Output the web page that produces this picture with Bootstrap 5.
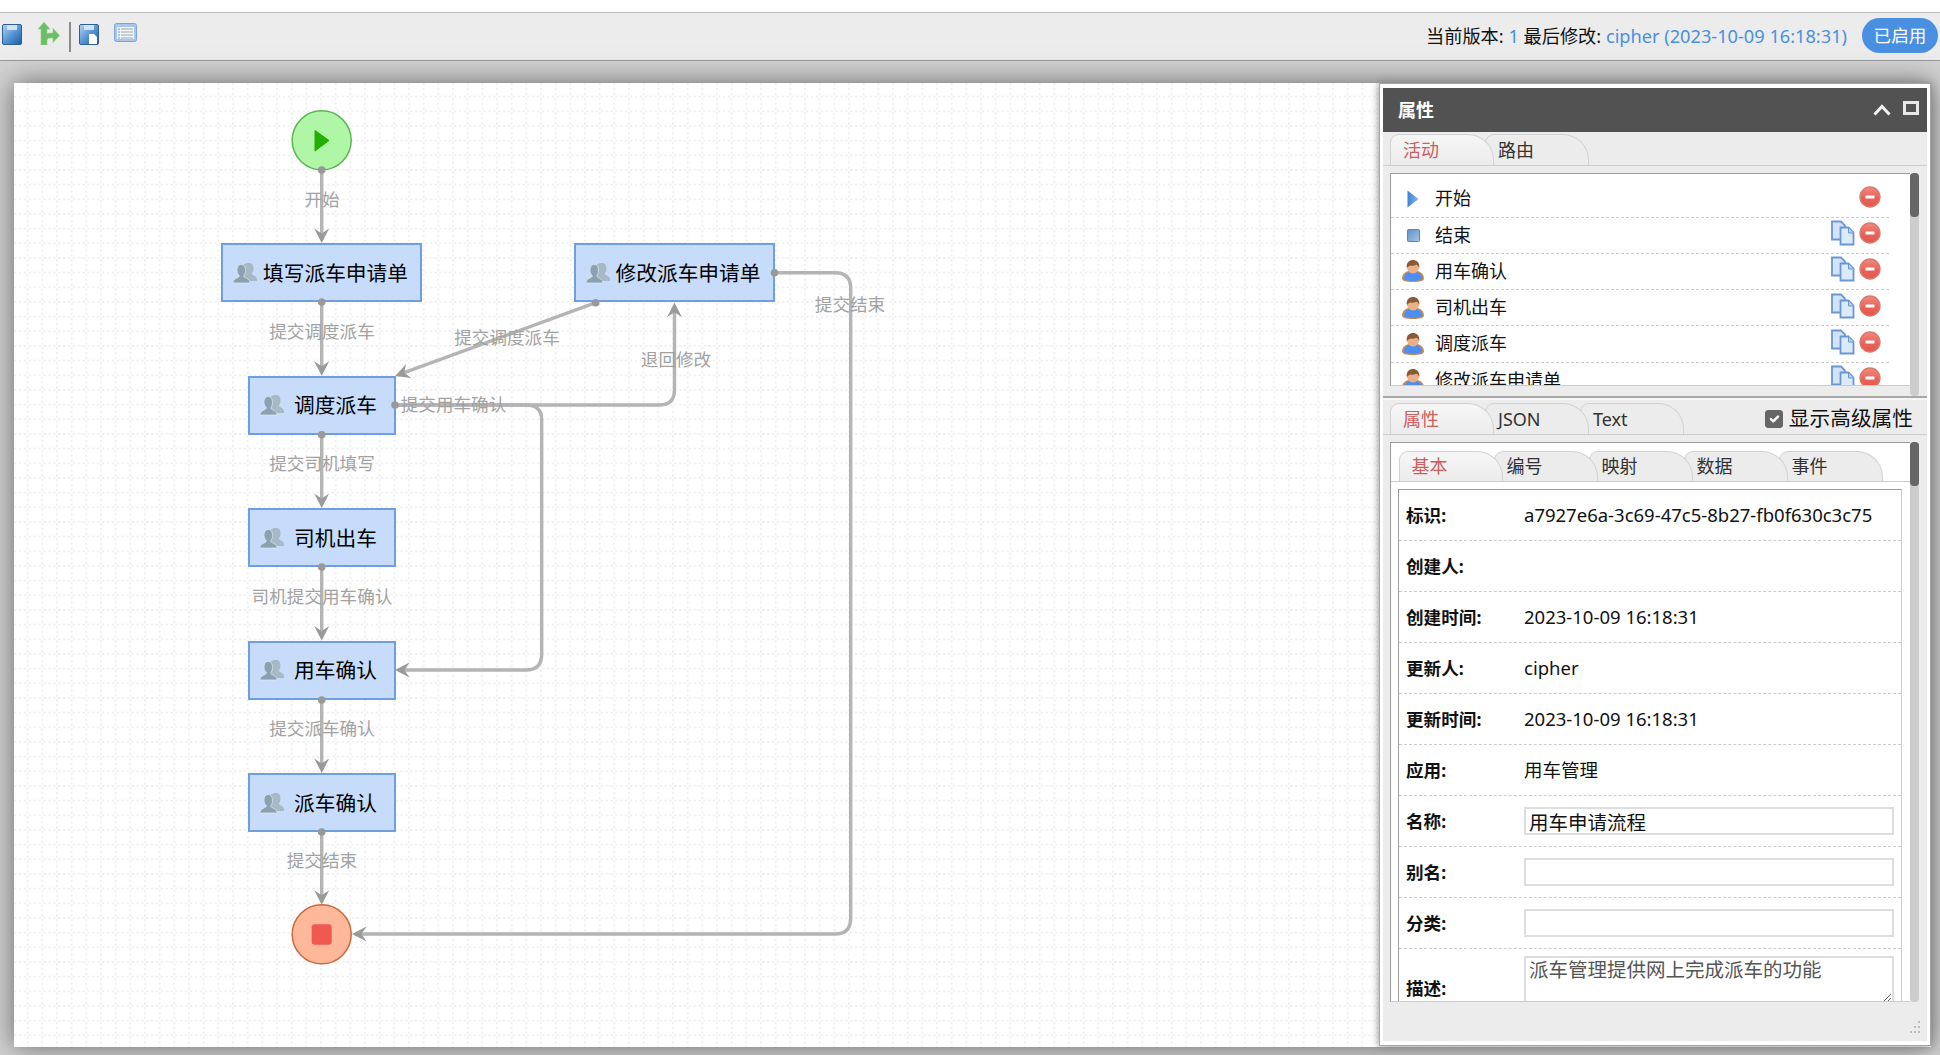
<!DOCTYPE html>
<html lang="zh-CN">
<head>
<meta charset="utf-8">
<title>流程设计</title>
<link rel="stylesheet" href="https://cdn.jsdelivr.net/npm/bootstrap@5.3.0/dist/css/bootstrap.min.css">
<style>
html,body{height:1055px;overflow:hidden}
body{font-family:"Noto Sans","Noto Sans CJK SC",sans-serif;font-size:18px;color:#111;background:#fff;line-height:1.3}
.strip{height:13px;border-bottom:1px solid #bcbcbc;background:#fff}
.tools{height:48px;background:#ececec;border-bottom:1px solid #989898;padding-top:9px}
.tool-sep{width:2px;height:30px;background:#8c8c8c}
.t1{margin:2px 0 0 2px}.t2{margin:0 9px 0 16px}.t3{margin:2px 0 0 8px}.t4{margin:1px 0 0 15px}
.ver{margin-top:3px;margin-right:15px;font-size:18.2px}
.ver b{font-weight:400;color:#4a90e2}
.pill{width:76px;height:35px;margin:-4px 2px 0 0;border-radius:18px;background:#4a90e2;color:#fff;font-size:17.6px}
.stage{height:994px;background:#d2d2d2}
.canvas{left:14px;top:22px;width:1917px;height:964px;background:#fff;box-shadow:0 0 26px #666}
.flow{left:0;top:0}
.flow text{font-size:17.6px;fill:#a2a2a2;text-anchor:middle;font-family:"Noto Sans CJK SC",sans-serif}
.node{height:59px;width:148px;background:#c6dcfa;border:2px solid #6f9fe0;padding:0 6px 0 10px;font-size:20.7px;color:#000;white-space:nowrap}
.node span{flex:1;text-align:center;padding-top:1px}
.wide{width:201px}
.n1{left:207px;top:160px}.n2{left:233.500px;top:292.600px}.n3{left:233.500px;top:425px}.n4{left:233.500px;top:557.500px}.n5{left:233.500px;top:690px}.n6{left:559.500px;top:160px}
.win{left:1379px;top:22px;width:552px;height:963px;background:#fff;border:1px solid #a4a4a4;padding:4px 3px;box-shadow:0 0 8px #888}
.win-in{background:#ececec;height:100%}
.win-head{height:44px;background:#525252;color:#fff;font-weight:700;padding:0 8px 0 15px}
.win-head span{padding-top:2px}
.tabs1{height:34px;padding:2px 0 0 7px;border-bottom:1px solid #ccc}
.tabs2{height:33px;padding:1px 0 0 7px;border-bottom:1px solid #ccc}
.tabs3{height:39px;padding:8px 0 0 7.500px;border-bottom:1px solid #ccc}
.tabx{width:104px;height:31px;margin-right:-9px;padding-left:12px;border:1px solid #d2d2d2;border-bottom:0;border-radius:9px 26px 0 0;background:#ececec;color:#333;line-height:31px}
.tabx.on{background:linear-gradient(#f6f6f6,#ececec);color:#c9605f}
.tabs3 .tabx{height:30px;line-height:28px}
.z1{z-index:5}.z2{z-index:4}.z3{z-index:3}.z4{z-index:2}.z5{z-index:1}
.list-wrap{height:231px;padding:7px 8px 0 7px}
.list-box{height:213px;background:#fff;border:1px solid #9c9c9c;border-right:0;border-bottom-color:#ccc;padding-top:7.500px;overflow:hidden}
.sbar{width:9px;background:#ccc;border-radius:4px}
.sbar i{display:block;width:9px;height:44px;background:#666;border-radius:4px}
.li-row{width:498px;height:36.250px;border-bottom:1px dashed #ccc;padding-right:8px}
.li-ic{width:44px}
.div2{height:6px;border-top:2px solid #a8a8a8;background:linear-gradient(#f6f6f6,#f6f6f6) 0 0/100% 2px no-repeat}
.adv{margin-left:auto;margin-right:14px;font-size:20.700px;line-height:1.3;color:#111}
.adv .form-check-input{width:18px;height:18px;margin:0 6px 0 0;border-radius:3px;background-color:#666;border-color:#666}
.box2-wrap{height:567px;padding:7px 8px 0 7px}
.box2{height:560px;background:#fff;border:1px solid #9c9c9c;border-right:0;border-bottom-color:#ccc;overflow:hidden}
.ptable{margin:7px 7px 0 7px;width:504px;border:1px solid #9c9c9c;border-right-color:#ccc;border-bottom:0}
.prow{height:51px;border-bottom:1px dashed #ccc}
.plab{width:125px;padding-left:7px;font-weight:700;font-size:17.6px;color:#111}
.pval{color:#111;font-size:18.500px}
.pinp.form-control{width:370px;height:28px;min-height:0;padding:0 3px;border:2px solid #ddd;border-radius:0;font-size:19.500px;line-height:1.2;color:#111;font-family:inherit;background:#fff}
textarea.pinp.form-control{height:48px;color:#555}
.row-d{height:60px;align-items:flex-start!important;padding-top:7px}
.row-d .plab{padding-top:21px}
.foot{height:39px}
.grip{right:6px;bottom:7px}
.defs{width:0;height:0}
</style>
</head>
<body>
<svg class="defs position-absolute" xmlns="http://www.w3.org/2000/svg">
<defs>
<linearGradient id="gSave" x1="0" y1="0" x2="1" y2="1"><stop offset="0" stop-color="#b4d3f2"/><stop offset=".5" stop-color="#5796d6"/><stop offset="1" stop-color="#1f5a9c"/></linearGradient>
<linearGradient id="gDel" x1="0" y1="0" x2="0" y2="1"><stop offset="0" stop-color="#f28a7e"/><stop offset=".55" stop-color="#e9635a"/><stop offset="1" stop-color="#e2574c"/></linearGradient>
<linearGradient id="gTri" x1="0" y1="0" x2="1" y2="0"><stop offset="0" stop-color="#3c7fd8"/><stop offset="1" stop-color="#8db6ec"/></linearGradient>
<linearGradient id="gSq" x1="0" y1="0" x2="1" y2="1"><stop offset="0" stop-color="#5a8fc6"/><stop offset="1" stop-color="#a8c6e6"/></linearGradient>
<symbol id="sGroup" viewBox="0 0 24 22">
<path d="M16.500 1c2.500 0 4 2.300 4 5.500 0 2.300-.9 4.200-1.800 5 0 1 2.300 1.800 3.800 3 1 .8 1.500 2 1.500 4.500H10c0-3-1-5-2-6 .5-.5 2.700-1 2.700-1.500-.9-.8-1.700-2.700-1.700-5 0-3.200 3-5.500 6.500-5.500z" fill="#a6b9c5"/>
<path d="M8 2.500c3 0 4.500 2.500 4.500 6 0 2.500-1 4.500-2 5.500 0 1 3 2 5 3.500 1 .8 1.500 2 1.500 3.500H0c0-1.500 .5-2.700 1.500-3.500 2-1.500 5-2.500 5-3.500-1-1-2.500-3-2.500-5.500 0-3.500 1.500-6 4-6z" fill="#8aa2b0" stroke="#dfe9f5" stroke-width=".7"/>
</symbol>
<symbol id="sUser" viewBox="0 0 22 22">
<path d="M0 18.500c0-5 4-8 11-8s11 3 11 8c0 2.500-4 3.500-11 3.500S0 21 0 18.500z" fill="#c98a55"/>
<path d="M2 18.500c0-4.500 4-7 9-7s9 2.500 9 7c0 1.500-4 2.500-9 2.500s-9-1-9-2.500z" fill="#4c8ff0"/>
<ellipse cx="11" cy="7" rx="6.200" ry="6.500" fill="#e9b08a"/>
<path d="M4.800 8C4 2 8 0 11 0s7 2 6.200 8c-.7-2-1.700-3.300-3.200-3.300-1 .9-4.600 1.200-5.600.8C7 6 5.800 7 4.800 8z" fill="#8a5a34"/>
</symbol>
<symbol id="sCopy" viewBox="0 0 24 26">
<path d="M1 1.500h9l4 4v14H1z" fill="#d3e4fa" stroke="#6a96d6" stroke-width="1.800"/>
<path d="M9.500 7.500h8l5 5v12h-13z" fill="#dcebfc" stroke="#6a96d6" stroke-width="1.800"/>
<path d="M17.500 8v5h5" fill="#b9d2f4" stroke="#6a96d6"/>
</symbol>
<symbol id="sDel" viewBox="0 0 22 22">
<circle cx="11" cy="11" r="10" fill="url(#gDel)" stroke="#d8796c" stroke-width="1.300"/>
<rect x="6.500" y="9.500" width="9" height="3" rx=".5" fill="#fff"/>
</symbol>
</defs>
</svg>

<div class="strip"></div>
<div class="tools d-flex align-items-start">
  <svg class="t1" width="20" height="21" viewBox="0 0 20 21"><rect x=".5" y=".5" width="19" height="20" rx="1.500" fill="url(#gSave)" stroke="#2d5f95"/><rect x="5" y="1" width="10" height="5" fill="#cfe2f6"/></svg>
  <svg class="t2" width="22" height="23" viewBox="0 0 22 23"><path d="M6 .3L12 7H9v5c0 0 1-1 3-1h3V6.500l6.700 7-6.700 7V16h-3c-2 0-3 1-3 3v4H3V7H0z" fill="#6bbd68" stroke="#8fd08a" stroke-width=".6"/></svg>
  <div class="tool-sep"></div>
  <svg class="t3" width="20" height="21" viewBox="0 0 20 21"><rect x=".5" y=".5" width="19" height="20" rx="1.500" fill="url(#gSave)" stroke="#2d5f95"/><rect x="5" y="1" width="10" height="5" fill="#cfe2f6"/><path d="M10 10h5l3 3v7h-8z" fill="#fff"/></svg>
  <svg class="t4" width="23" height="19" viewBox="0 0 23 19"><rect x=".5" y=".5" width="22" height="18" rx="2" fill="#a9c6ee" stroke="#7fa3d8"/><rect x="3" y="4" width="17" height="12" fill="#f4f6f8"/><path d="M7 6h12M7 9h12M7 12h12M7 15h12" stroke="#9aa5ad"/><path d="M4 6h2M4 9h2M4 12h2M4 15h2" stroke="#5d95dd"/></svg>
  <div class="ver ms-auto">当前版本: <b>1</b> 最后修改: <b>cipher (2023-10-09 16:18:31)</b></div>
  <div class="pill d-flex align-items-center justify-content-center">已启用</div>
</div>

<div class="stage position-relative">
  <div class="canvas position-absolute">
    <svg class="flow position-absolute" width="1917" height="964" viewBox="14 83 1917 964" xmlns="http://www.w3.org/2000/svg">
      <defs>
        <pattern id="grid" x="14" y="83" width="14.667" height="14.667" patternUnits="userSpaceOnUse">
          <path d="M13.670 0V14.667M0 13.670H14.667" stroke="#e9e9e9" stroke-width="1.200" stroke-dasharray="2.500 2.390" fill="none"/>
        </pattern>
      </defs>
      <rect x="14" y="83" width="1917" height="964" fill="url(#grid)"/>
    </svg>
    <div class="node wide n1 position-absolute d-flex align-items-center"><svg width="24" height="22"><use href="#sGroup"/></svg><span>填写派车申请单</span></div>
    <div class="node n2 position-absolute d-flex align-items-center"><svg width="24" height="22"><use href="#sGroup"/></svg><span>调度派车</span></div>
    <div class="node n3 position-absolute d-flex align-items-center"><svg width="24" height="22"><use href="#sGroup"/></svg><span>司机出车</span></div>
    <div class="node n4 position-absolute d-flex align-items-center"><svg width="24" height="22"><use href="#sGroup"/></svg><span>用车确认</span></div>
    <div class="node n5 position-absolute d-flex align-items-center"><svg width="24" height="22"><use href="#sGroup"/></svg><span>派车确认</span></div>
    <div class="node wide n6 position-absolute d-flex align-items-center"><svg width="24" height="22"><use href="#sGroup"/></svg><span>修改派车申请单</span></div>
    <svg class="flow position-absolute pe-none" width="1917" height="964" viewBox="14 83 1917 964" xmlns="http://www.w3.org/2000/svg">
      <defs>
        <marker id="arr" markerUnits="userSpaceOnUse" markerWidth="18" markerHeight="16" refX="11.500" refY="8" orient="auto">
          <path d="M0 .5L14.500 8 0 15.500 5 8z" fill="#9a9a9a"/>
        </marker>
      </defs>
      <g fill="none" stroke="#b4b4b4" stroke-width="3.400">
        <path d="M321.700 170V240" marker-end="url(#arr)"/>
        <path d="M321.700 302V372.700" marker-end="url(#arr)"/>
        <path d="M595.700 302.700L398 374.900" marker-end="url(#arr)"/>
        <path d="M321.700 434.700V505" marker-end="url(#arr)"/>
        <path d="M321.700 567V637.500" marker-end="url(#arr)"/>
        <path d="M321.700 700V770" marker-end="url(#arr)"/>
        <path d="M321.700 832V901.700" marker-end="url(#arr)"/>
        <path d="M395 405H526Q541.700 405 541.700 420V654Q541.700 670 526 670H398" marker-end="url(#arr)"/>
        <path d="M395 405H659Q674.500 405 674.500 390V305.700" marker-end="url(#arr)"/>
        <path d="M774.500 272.700H835Q850.700 272.700 850.700 288V918Q850.700 934 835 934H355" marker-end="url(#arr)"/>
      </g>
      <circle cx="321.700" cy="140.300" r="29.500" fill="#aff6a7" stroke="#5cb552" stroke-width="1.500"/>
      <path d="M315 130.500L329 140.500 315 151z" fill="#23b000" stroke="#23b000" stroke-linejoin="round"/>
      <circle cx="321.700" cy="934.300" r="29.500" fill="#ffb899" stroke="#c9693c" stroke-width="1.500"/>
      <rect x="311.700" y="924.300" width="20" height="20.500" rx="3" fill="#ef5a50"/>
      <g fill="#999">
        <circle cx="321.700" cy="170" r="3.800"/><circle cx="321.700" cy="302" r="3.800"/><circle cx="321.700" cy="434.700" r="3.800"/><circle cx="321.700" cy="567" r="3.800"/><circle cx="321.700" cy="700" r="3.800"/><circle cx="321.700" cy="832" r="3.800"/>
        <circle cx="595.700" cy="302.700" r="3.800"/><circle cx="395" cy="405" r="3.800"/><circle cx="774.500" cy="272.700" r="3.800"/>
      </g>
      <text x="322" y="206">开始</text>
      <text x="322" y="338">提交调度派车</text>
      <text x="507" y="344">提交调度派车</text>
      <text x="676" y="366">退回修改</text>
      <text x="850" y="311">提交结束</text>
      <text x="453.500" y="411">提交用车确认</text>
      <text x="322" y="470">提交司机填写</text>
      <text x="322" y="603">司机提交用车确认</text>
      <text x="322" y="735">提交派车确认</text>
      <text x="322" y="867">提交结束</text>
    </svg>
  </div>

  <div class="win position-absolute">
    <div class="win-in d-flex flex-column">
      <div class="win-head d-flex align-items-center">
        <span>属性</span>
        <svg class="ms-auto me-2" width="18" height="12" viewBox="0 0 18 12"><path d="M1.500 10.500L9 2.500l7.500 8" fill="none" stroke="#f2f2f2" stroke-width="3"/></svg>
        <svg class="ms-1 mb-1" width="16" height="14" viewBox="0 0 16 14"><rect x="1.500" y="1.500" width="13" height="11" fill="none" stroke="#e8e8e8" stroke-width="3"/></svg>
      </div>
      <div class="tabs1 d-flex">
        <div class="tabx on position-relative z1">活动</div>
        <div class="tabx position-relative z2">路由</div>
      </div>
      <div class="list-wrap d-flex">
        <div class="list-box flex-grow-1">
          <div class="li-row d-flex align-items-center">
            <div class="li-ic d-flex justify-content-center"><svg width="12" height="18" viewBox="0 0 12 18"><path d="M.5.500L11.500 9 .5 17.500z" fill="url(#gTri)"/></svg></div>
            <span>开始</span>
            <svg class="ms-auto mb-1" width="22" height="22"><use href="#sDel"/></svg>
          </div>
          <div class="li-row d-flex align-items-center">
            <div class="li-ic d-flex justify-content-center"><svg width="13" height="13" viewBox="0 0 13 13"><rect x=".5" y=".5" width="12" height="12" rx="1" fill="url(#gSq)" stroke="#5586bc"/></svg></div>
            <span>结束</span>
            <svg class="ms-auto mb-1 me-1" width="24" height="26"><use href="#sCopy"/></svg><svg class="mb-1" width="22" height="22"><use href="#sDel"/></svg>
          </div>
          <div class="li-row d-flex align-items-center">
            <div class="li-ic d-flex justify-content-center"><svg width="22" height="22"><use href="#sUser"/></svg></div>
            <span>用车确认</span>
            <svg class="ms-auto mb-1 me-1" width="24" height="26"><use href="#sCopy"/></svg><svg class="mb-1" width="22" height="22"><use href="#sDel"/></svg>
          </div>
          <div class="li-row d-flex align-items-center">
            <div class="li-ic d-flex justify-content-center"><svg width="22" height="22"><use href="#sUser"/></svg></div>
            <span>司机出车</span>
            <svg class="ms-auto mb-1 me-1" width="24" height="26"><use href="#sCopy"/></svg><svg class="mb-1" width="22" height="22"><use href="#sDel"/></svg>
          </div>
          <div class="li-row d-flex align-items-center">
            <div class="li-ic d-flex justify-content-center"><svg width="22" height="22"><use href="#sUser"/></svg></div>
            <span>调度派车</span>
            <svg class="ms-auto mb-1 me-1" width="24" height="26"><use href="#sCopy"/></svg><svg class="mb-1" width="22" height="22"><use href="#sDel"/></svg>
          </div>
          <div class="li-row d-flex align-items-center">
            <div class="li-ic d-flex justify-content-center"><svg width="22" height="22"><use href="#sUser"/></svg></div>
            <span>修改派车申请单</span>
            <svg class="ms-auto mb-1 me-1" width="24" height="26"><use href="#sCopy"/></svg><svg class="mb-1" width="22" height="22"><use href="#sDel"/></svg>
          </div>
        </div>
        <div class="sbar"><i></i></div>
      </div>
      <div class="div2"></div>
      <div class="tabs2 d-flex">
        <div class="tabx on position-relative z1">属性</div>
        <div class="tabx position-relative z2">JSON</div>
        <div class="tabx position-relative z3">Text</div>
        <div class="adv d-flex align-items-center"><input class="form-check-input" type="checkbox" checked id="advChk"><label for="advChk">显示高级属性</label></div>
      </div>
      <div class="box2-wrap d-flex">
        <div class="box2 flex-grow-1">
          <div class="tabs3 d-flex">
            <div class="tabx on position-relative z1">基本</div>
            <div class="tabx position-relative z2">编号</div>
            <div class="tabx position-relative z3">映射</div>
            <div class="tabx position-relative z4">数据</div>
            <div class="tabx position-relative z5">事件</div>
          </div>
          <div class="ptable">
            <div class="prow d-flex align-items-center"><div class="plab">标识:</div><div class="pval">a7927e6a-3c69-47c5-8b27-fb0f630c3c75</div></div>
            <div class="prow d-flex align-items-center"><div class="plab">创建人:</div><div class="pval"></div></div>
            <div class="prow d-flex align-items-center"><div class="plab">创建时间:</div><div class="pval">2023-10-09 16:18:31</div></div>
            <div class="prow d-flex align-items-center"><div class="plab">更新人:</div><div class="pval">cipher</div></div>
            <div class="prow d-flex align-items-center"><div class="plab">更新时间:</div><div class="pval">2023-10-09 16:18:31</div></div>
            <div class="prow d-flex align-items-center"><div class="plab">应用:</div><div class="pval">用车管理</div></div>
            <div class="prow d-flex align-items-center"><div class="plab">名称:</div><input class="pinp form-control" value="用车申请流程"></div>
            <div class="prow d-flex align-items-center"><div class="plab">别名:</div><input class="pinp form-control" value=""></div>
            <div class="prow d-flex align-items-center"><div class="plab">分类:</div><input class="pinp form-control" value=""></div>
            <div class="prow row-d d-flex"><div class="plab">描述:</div><textarea class="pinp form-control">派车管理提供网上完成派车的功能</textarea></div>
          </div>
        </div>
        <div class="sbar"><i></i></div>
      </div>
      <div class="foot position-relative">
        <svg class="grip position-absolute" width="12" height="13" viewBox="0 0 12 13" fill="#bdbdbd"><rect x="9" y="0" width="2" height="2"/><rect x="5" y="5" width="2" height="2"/><rect x="9" y="5" width="2" height="2"/><rect x="1" y="10" width="2" height="2"/><rect x="5" y="10" width="2" height="2"/><rect x="9" y="10" width="2" height="2"/></svg>
      </div>
    </div>
  </div>
</div>
<script src="https://cdn.jsdelivr.net/npm/bootstrap@5.3.0/dist/js/bootstrap.bundle.min.js"></script>
</body>
</html>
